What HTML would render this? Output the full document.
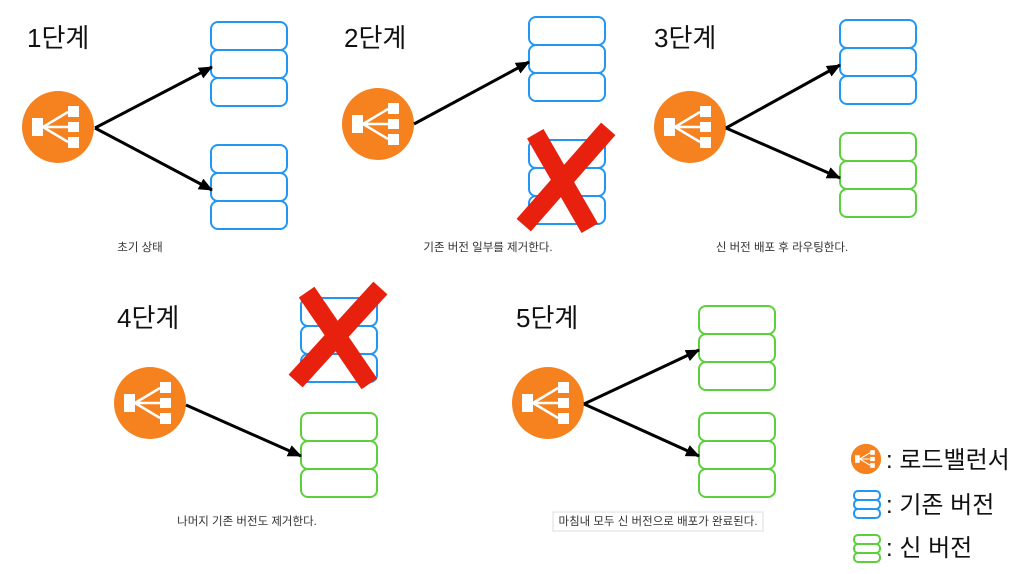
<!DOCTYPE html>
<html><head><meta charset="utf-8"><style>
html,body{margin:0;padding:0;background:#fff;width:1020px;height:574px;overflow:hidden}
svg{display:block}
text{font-family:"Liberation Sans","Noto Sans CJK KR",sans-serif}
</style></head><body>
<svg width="1020" height="574" viewBox="0 0 1020 574" xmlns="http://www.w3.org/2000/svg">
<defs>
<marker id="ah" markerWidth="16" markerHeight="14" refX="13" refY="6" orient="auto" markerUnits="userSpaceOnUse"><path d="M0,0 L14,6 L0,12 z" fill="#000"/></marker>
<g id="lb">
<circle cx="0" cy="0" r="36" fill="#f5821f"/>
<rect x="-26" y="-9" width="11" height="18" fill="#fff"/>
<rect x="10" y="-21" width="11" height="11" fill="#fff"/>
<rect x="10" y="-5" width="11" height="10" fill="#fff"/>
<rect x="10" y="10" width="11" height="11" fill="#fff"/>
<path d="M-15,0 L10,-15 M-15,0 L10,0 M-15,0 L10,15" stroke="#fff" stroke-width="2.5"/>
</g>
<g id="stk" fill="none" stroke-width="2">
<rect x="0" y="0" width="76" height="28" rx="7"/>
<rect x="0" y="28" width="76" height="28" rx="7"/>
<rect x="0" y="56" width="76" height="28" rx="7"/>
</g>
<g id="mini" fill="none" stroke-width="2">
<rect x="0" y="0" width="26" height="9" rx="4"/>
<rect x="0" y="9" width="26" height="9" rx="4"/>
<rect x="0" y="18" width="26" height="9" rx="4"/>
</g>
</defs>
<g font-size="26" fill="#111">
<text x="27" y="47">1단계</text>
<text x="344" y="47">2단계</text>
<text x="654" y="47">3단계</text>
<text x="117" y="327">4단계</text>
<text x="516" y="327">5단계</text>
</g>
<use href="#lb" x="58" y="127"/>
<use href="#stk" x="211" y="22" stroke="#2196f3"/>
<use href="#stk" x="211" y="145" stroke="#2196f3"/>
<g stroke="#000" stroke-width="3" marker-end="url(#ah)">
<line x1="95" y1="128" x2="212" y2="67"/><line x1="95" y1="128" x2="212" y2="190"/>
</g>
<use href="#lb" x="378" y="124"/>
<use href="#stk" x="529" y="17" stroke="#2196f3"/>
<use href="#stk" x="529" y="140" stroke="#2196f3"/>
<line x1="414" y1="124" x2="529" y2="62" stroke="#000" stroke-width="3" marker-end="url(#ah)"/>
<g stroke="#e8200e" stroke-width="19" stroke-linecap="square">
<line x1="540" y1="142" x2="585" y2="220"/><line x1="602" y1="136" x2="530" y2="218"/>
</g>
<use href="#lb" x="690" y="127"/>
<use href="#stk" x="840" y="20" stroke="#2196f3"/>
<use href="#stk" x="840" y="133" stroke="#5cd03c"/>
<g stroke="#000" stroke-width="3" marker-end="url(#ah)">
<line x1="726" y1="128" x2="840" y2="65"/><line x1="726" y1="128" x2="840" y2="178"/>
</g>
<use href="#lb" x="150" y="403"/>
<use href="#stk" x="301" y="298" stroke="#2196f3"/>
<use href="#stk" x="301" y="413" stroke="#5cd03c"/>
<line x1="186" y1="405" x2="301" y2="456" stroke="#000" stroke-width="3" marker-end="url(#ah)"/>
<g stroke="#e8200e" stroke-width="19" stroke-linecap="square">
<line x1="312" y1="300" x2="364" y2="376"/><line x1="374" y1="295" x2="302" y2="374"/>
</g>
<use href="#lb" x="548" y="403"/>
<use href="#stk" x="699" y="306" stroke="#5cd03c"/>
<use href="#stk" x="699" y="413" stroke="#5cd03c"/>
<g stroke="#000" stroke-width="3" marker-end="url(#ah)">
<line x1="584" y1="404" x2="699" y2="350"/><line x1="584" y1="404" x2="699" y2="456"/>
</g>
<g font-size="11.5" fill="#333" text-anchor="middle">
<text x="140" y="251">초기 상태</text>
<text x="488" y="251">기존 버전 일부를 제거한다.</text>
<text x="782" y="251">신 버전 배포 후 라우팅한다.</text>
<text x="247" y="525">나머지 기존 버전도 제거한다.</text>
<text x="658" y="525">마침내 모두 신 버전으로 배포가 완료된다.</text>
</g>
<rect x="553" y="512" width="210" height="19" fill="none" stroke="#ddd"/>
<g transform="translate(866,459) scale(0.42)"><use href="#lb"/></g>
<use href="#mini" x="854" y="491" stroke="#2196f3"/>
<use href="#mini" x="854" y="535" stroke="#5cd03c"/>
<g font-size="24" fill="#111">
<text x="886" y="468">: 로드밸런서</text>
<text x="886" y="513">: 기존 버전</text>
<text x="886" y="556">: 신 버전</text>
</g>
</svg>
</body></html>
